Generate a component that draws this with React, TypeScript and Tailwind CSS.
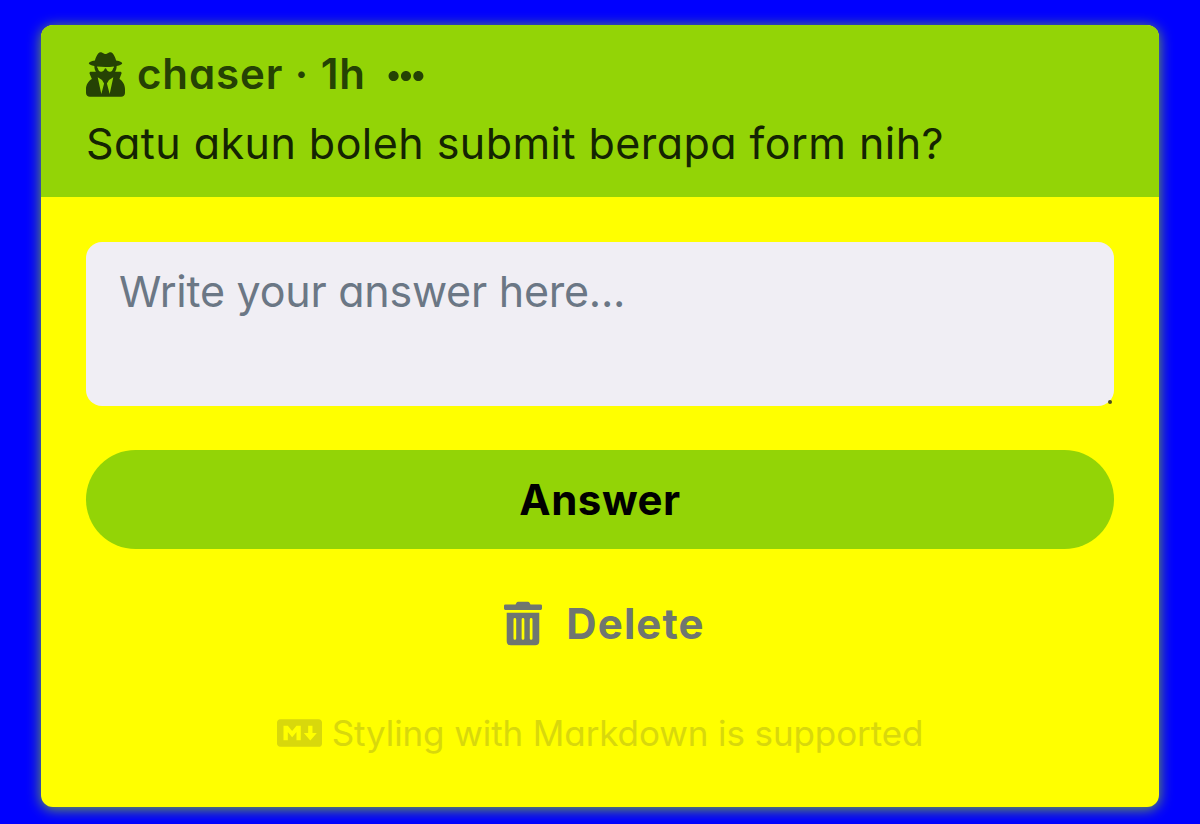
import React from 'react';
import { FaUserSecret, FaEllipsisH, FaTrashAlt, FaMarkdown } from 'react-icons/fa';

const fontClass = "font-['Inter','Noto_Sans',sans-serif] [font-feature-settings:'cv11','ss03']";

export default function App() {
  return (
    <div className={`min-h-[824px] bg-[#0000ff] px-[41px] pt-[25px] pb-[17px] ${fontClass}`}>
      <div className="h-[782px] overflow-hidden rounded-[12px] bg-[#ffff00] shadow-[0_2px_14px_rgba(147,212,6,0.8)]">
        {/* Question header */}
        <div className="h-[172px] bg-[#93d406] px-[45px] pt-[23px]">
          <div className="flex h-[50px] items-center text-[#254204]">
            <FaUserSecret className="mt-[2px] h-[45px] w-[39px] shrink-0" />
            <span className="ml-[12px] text-[42px] font-semibold tracking-[0.9px]">chaser · 1h</span>
            <FaEllipsisH className="ml-[22px] mt-[6px] h-[36px] w-[36px] shrink-0" />
          </div>
          <p className="mt-[18px] text-[43px] leading-[54px] tracking-[0.45px] text-[#142402]">
            Satu akun boleh submit berapa form nih?
          </p>
        </div>

        {/* Answer form */}
        <div className="px-[45px] pt-[45px]">
          <div className="relative">
            <textarea
              className="block h-[164px] w-full resize-none rounded-[16px] bg-[#f0eef4] px-[33px] py-[22px] text-[43px] leading-[54px] tracking-[-0.24px] text-[#14181c] outline-none placeholder:text-[#6b7785]"
              placeholder="Write your answer here..."
            />
            <span className="absolute bottom-[2px] right-[2px] h-[4px] w-[4px] rounded-full bg-[#4a4a20]" />
          </div>
          <button className="mt-[44px] block h-[99px] w-full rounded-full bg-[#93d406] text-center text-[42px] font-bold tracking-[0.5px] text-black">
            Answer
          </button>
          <button className="mt-[49px] flex h-[50px] w-full items-center justify-center pl-[9px] text-[#6f7670]">
            <FaTrashAlt className="h-[45px] w-[38px]" />
            <span className="ml-[24px] text-[42px] font-bold tracking-[1.1px]">Delete</span>
          </button>
          <div className="mt-[60px] flex h-[50px] items-center justify-center text-[#d8d80c]">
            <FaMarkdown className="h-[38px] w-[45px]" />
            <span className="ml-[10px] text-[35px] tracking-[-0.1px]">Styling with Markdown is supported</span>
          </div>
        </div>
      </div>
    </div>
  );
}
